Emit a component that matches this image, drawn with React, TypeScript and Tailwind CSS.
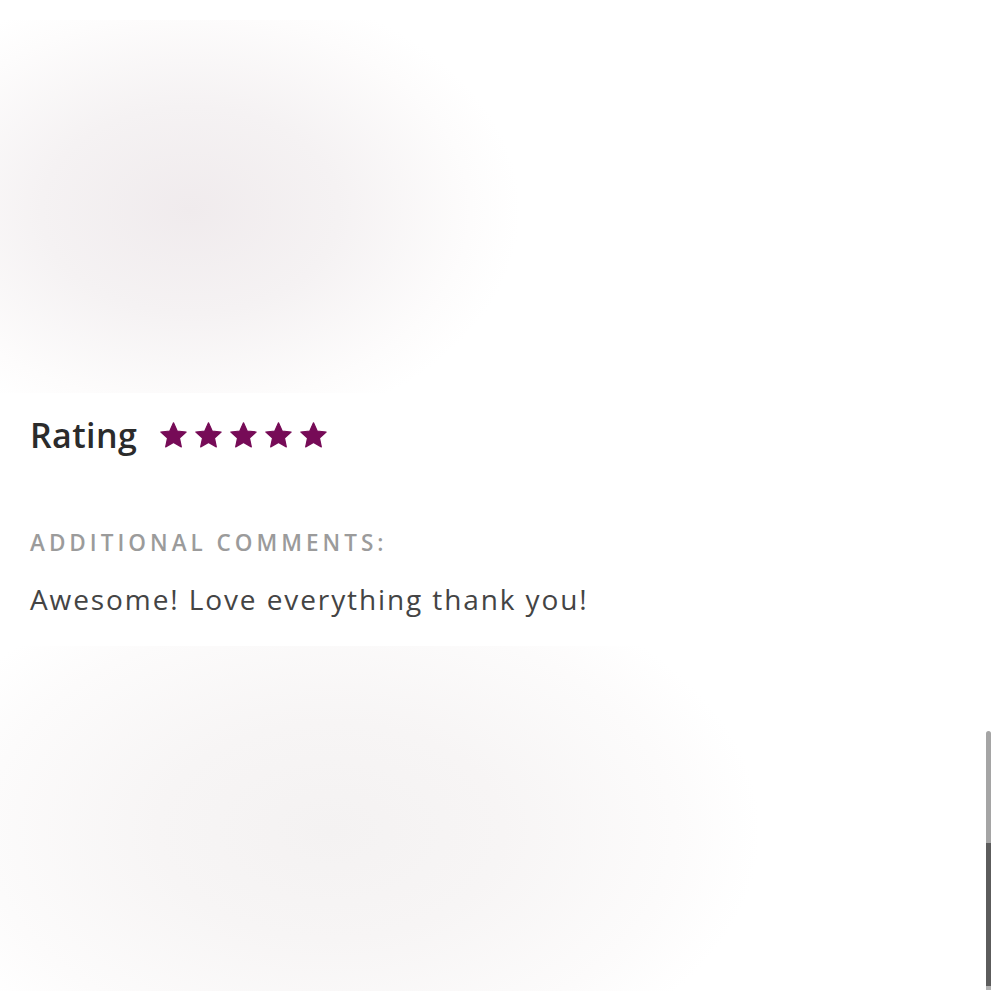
import React from "react";

type StarProps = { className?: string };

function Star({ className }: StarProps) {
  return (
    <svg
      viewBox="0 0 24 24"
      className={className}
      fill="currentColor"
      stroke="currentColor"
      strokeWidth={1}
      strokeLinejoin="round"
    >
      <path d="M12 1.5L15.06 8.29L22.46 9.1L16.95 14.11L18.47 21.4L12 17.7L5.53 21.4L7.05 14.11L1.54 9.1L8.94 8.29Z" />
    </svg>
  );
}

export default function App() {
  const rating = 5;

  return (
    <div className="relative min-h-[1000px] w-full bg-white font-['Open_Sans',sans-serif]">
      {/* blurred photo above the review */}
      <div className="pt-[20px]">
        <div className="h-[373px] w-full bg-[radial-gradient(ellipse_330px_230px_at_190px_190px,#f0ebed_0%,#f5f2f3_45%,#fdfcfc_85%,#ffffff_100%)]" />
      </div>

      <section className="px-[30px]">
        <div className="mt-[22px] flex items-center gap-[22px]">
          <h3 className="text-[34px] leading-[40px] font-semibold tracking-[0.4px] text-[#2b2b2b]">
            Rating
          </h3>
          <div className="flex items-center gap-[6px] text-[#760b57]">
            {Array.from({ length: rating }).map((_, i) => (
              <Star key={i} className="h-[29px] w-[29px]" />
            ))}
          </div>
        </div>

        <p className="mt-[74px] text-[22.5px] leading-[28px] font-semibold tracking-[4px] text-[#9b9b9b]">
          ADDITIONAL COMMENTS:
        </p>
        <p className="mt-[24px] text-[28px] leading-[36px] tracking-[1.9px] text-[#444444]">
          Awesome! Love everything thank you!
        </p>
      </section>

      {/* blurred photo below the review */}
      <div className="mt-[29px] h-[345px] w-full bg-[radial-gradient(ellipse_430px_270px_at_330px_185px,#f4f2f2_0%,#f7f5f5_40%,#fcfbfb_80%,#ffffff_100%)]" />

      {/* scroll indicator */}
      <div className="absolute left-[986px] top-[731px] flex h-[259px] w-[5px] flex-col overflow-hidden rounded-t-full">
        <div className="h-[112px] bg-[#a5a5a5]" />
        <div className="h-[143px] bg-[#5c5c5c]" />
        <div className="flex-1 bg-[#b0b0b0]" />
      </div>
    </div>
  );
}
